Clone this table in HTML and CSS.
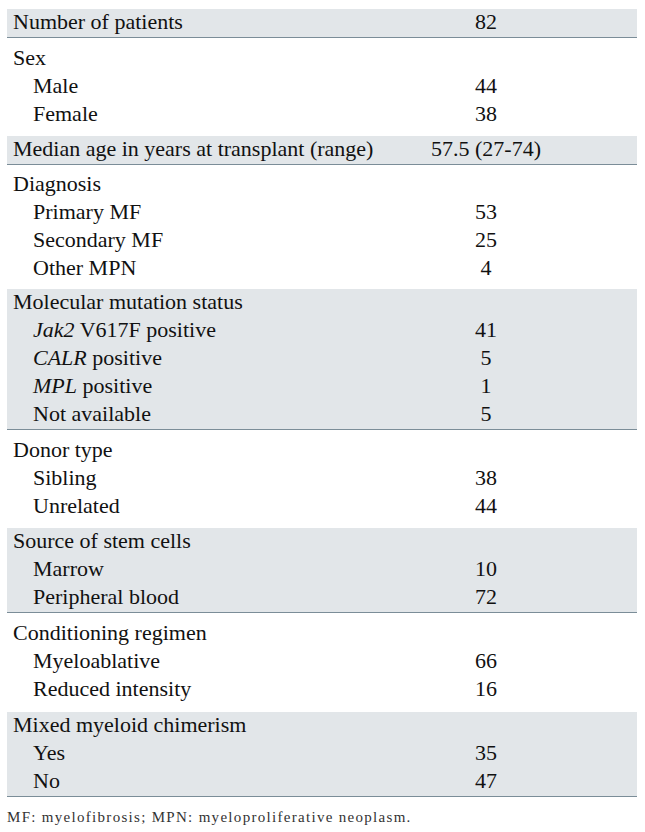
FILE: index.html
```html
<!DOCTYPE html>
<html lang="en">
<head>
<meta charset="utf-8">
<title>Patient characteristics</title>
<link rel="stylesheet" href="styles.css">
</head>
<body>
<div class="table">
  <section class="sec shaded">
    <div class="row"><span class="label">Number of patients</span><span class="val">82</span></div>
  </section>
  <section class="sec">
    <div class="row"><span class="label">Sex</span><span class="val"></span></div>
    <div class="row sub"><span class="label">Male</span><span class="val">44</span></div>
    <div class="row sub"><span class="label">Female</span><span class="val">38</span></div>
  </section>
  <section class="sec shaded">
    <div class="row"><span class="label">Median age in years at transplant (range)</span><span class="val">57.5 (27-74)</span></div>
  </section>
  <section class="sec tight">
    <div class="row"><span class="label">Diagnosis</span><span class="val"></span></div>
    <div class="row sub"><span class="label">Primary MF</span><span class="val">53</span></div>
    <div class="row sub"><span class="label">Secondary MF</span><span class="val">25</span></div>
    <div class="row sub"><span class="label">Other MPN</span><span class="val">4</span></div>
  </section>
  <section class="sec shaded">
    <div class="row"><span class="label">Molecular mutation status</span><span class="val"></span></div>
    <div class="row sub"><span class="label"><i>Jak2</i> V617F positive</span><span class="val">41</span></div>
    <div class="row sub"><span class="label"><i>CALR</i> positive</span><span class="val">5</span></div>
    <div class="row sub"><span class="label"><i>MPL</i> positive</span><span class="val">1</span></div>
    <div class="row sub"><span class="label">Not available</span><span class="val">5</span></div>
  </section>
  <section class="sec">
    <div class="row"><span class="label">Donor type</span><span class="val"></span></div>
    <div class="row sub"><span class="label">Sibling</span><span class="val">38</span></div>
    <div class="row sub"><span class="label">Unrelated</span><span class="val">44</span></div>
  </section>
  <section class="sec shaded">
    <div class="row"><span class="label">Source of stem cells</span><span class="val"></span></div>
    <div class="row sub"><span class="label">Marrow</span><span class="val">10</span></div>
    <div class="row sub"><span class="label">Peripheral blood</span><span class="val">72</span></div>
  </section>
  <section class="sec loose">
    <div class="row"><span class="label">Conditioning regimen</span><span class="val"></span></div>
    <div class="row sub"><span class="label">Myeloablative</span><span class="val">66</span></div>
    <div class="row sub"><span class="label">Reduced intensity</span><span class="val">16</span></div>
  </section>
  <section class="sec shaded">
    <div class="row"><span class="label">Mixed myeloid chimerism</span><span class="val"></span></div>
    <div class="row sub"><span class="label">Yes</span><span class="val">35</span></div>
    <div class="row sub"><span class="label">No</span><span class="val">47</span></div>
  </section>
</div>
<p class="note">MF: myelofibrosis; MPN: myeloproliferative neoplasm.</p>
</body>
</html>
```

FILE: styles.css
```css
html, body {
  margin: 0;
  padding: 0;
  background: #ffffff;
}

body {
  font-family: "Liberation Serif", "Times New Roman", serif;
  color: #111111;
}

.table {
  margin: 9px 0 0 7px;
  width: 630px;
}

.sec {
  padding: 7px 0;
}

.sec.tight {
  padding: 6px 0;
}

.sec.loose {
  padding: 7px 0 8px;
}

.sec.shaded {
  background: #e2e6e9;
  padding: 0;
  border-bottom: 1px solid #7b8d98;
}

.row {
  display: grid;
  grid-template-columns: 328px 1fr;
  height: 28px;
  line-height: 26px;
  font-size: 22px;
}

.label {
  padding-left: 6px;
  white-space: nowrap;
}

.sub .label {
  padding-left: 26px;
}

.val {
  text-align: center;
  white-space: nowrap;
}

.note {
  margin: 10px 0 0 7px;
  font-size: 15px;
  line-height: 20px;
  letter-spacing: 1.3px;
  color: #333333;
}
```
